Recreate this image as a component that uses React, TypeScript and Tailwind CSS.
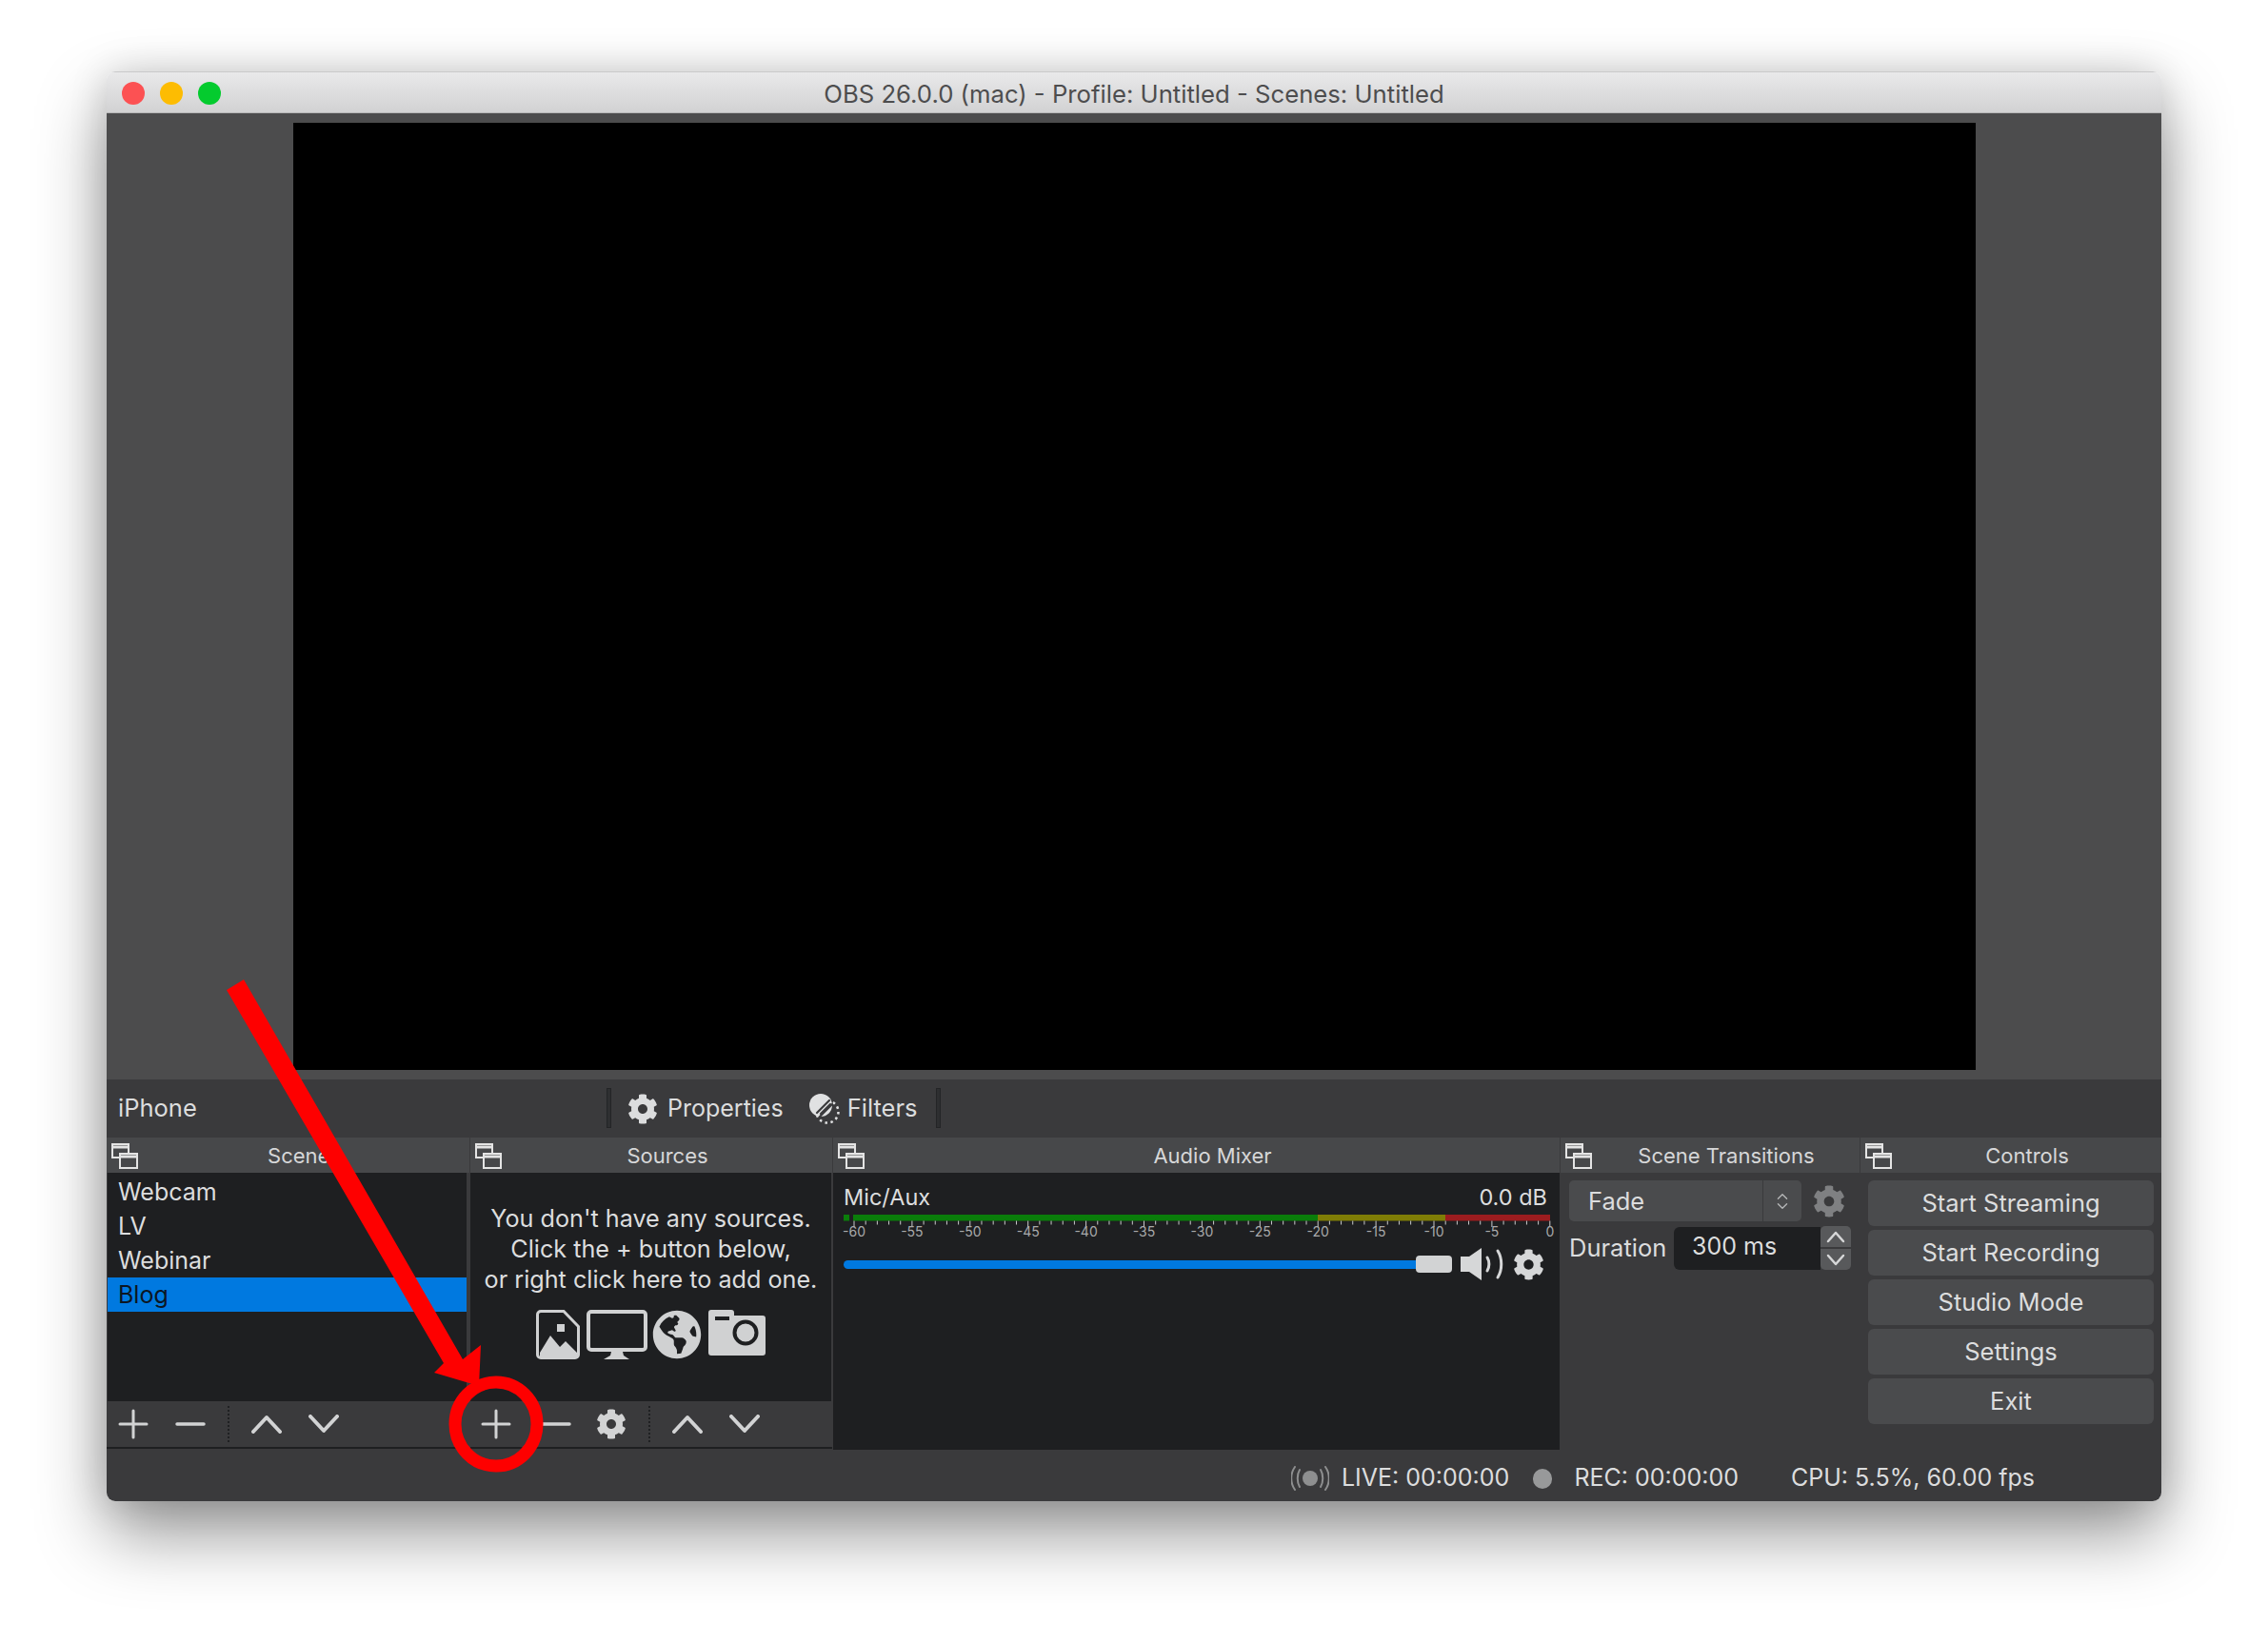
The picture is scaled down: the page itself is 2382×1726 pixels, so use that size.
import { FaCog, FaGlobeAmericas } from "react-icons/fa";
import { ChevronsUpDown } from "lucide-react";

const scenes = ["Webcam", "LV", "Webinar", "Blog"];
const buttons = ["Start Streaming", "Start Recording", "Studio Mode", "Settings", "Exit"];

function FloatIcon() {
  return (
    <svg width="30" height="28" viewBox="0 0 30 28" className="shrink-0 text-[#e4e4e4]" fill="none" stroke="currentColor" strokeWidth="2">
      <rect x="2" y="2" width="17" height="14" />
      <line x1="2" y1="5" x2="19" y2="5" strokeWidth="3" />
      <rect x="10" y="12" width="18" height="15" fill="#47484a" />
      <line x1="10" y1="15" x2="28" y2="15" strokeWidth="3" />
    </svg>
  );
}

function DockHeader({ title }: { title: string }) {
  return (
    <div className="h-[37px] bg-[#47484a] flex items-center shrink-0 pl-1">
      <FloatIcon />
      <div className="flex-1 text-center text-[22px] leading-none pr-0 text-[#d6d7d8]">{title}</div>
    </div>
  );
}

function PlusIcon() {
  return (
    <svg width="32" height="32" viewBox="0 0 32 32" stroke="#d2d3d4" strokeWidth="3" strokeLinecap="round">
      <line x1="2" y1="16" x2="30" y2="16" />
      <line x1="16" y1="2" x2="16" y2="30" />
    </svg>
  );
}

function MinusIcon() {
  return (
    <svg width="32" height="6" viewBox="0 0 32 6" stroke="#d2d3d4" strokeWidth="3.5" strokeLinecap="round">
      <line x1="2" y1="3" x2="30" y2="3" />
    </svg>
  );
}

function Chevron({ up }: { up?: boolean }) {
  return (
    <svg width="32" height="20" viewBox="0 0 32 20" fill="none" stroke="#d2d3d4" strokeWidth="4" strokeLinecap="round" strokeLinejoin="round">
      <polyline points={up ? "2,18 16,3 30,18" : "2,2 16,17 30,2"} />
    </svg>
  );
}

function DottedSep() {
  return <div className="h-[38px] border-l-2 border-dotted border-[#1f2022]" />;
}

function Slot({ w, children }: { w: string; children: React.ReactNode }) {
  return <div className={`${w} shrink-0 flex items-center justify-center`}>{children}</div>;
}

function ImageFileIcon() {
  return (
    <svg width="46" height="52" viewBox="0 0 46 52">
      <path d="M5 1.5h24l15.5 16V47a3.5 3.5 0 0 1-3.5 3.5H5A3.5 3.5 0 0 1 1.5 47V5A3.5 3.5 0 0 1 5 1.5z" fill="none" stroke="#d0d1d2" strokeWidth="3" />
      <rect x="22" y="15" width="8" height="8" fill="#d0d1d2" />
      <path d="M4 45 L15 27 L25 39 L31 33 L43 45 V49 H4 Z" fill="#d0d1d2" />
    </svg>
  );
}

function MonitorIcon() {
  return (
    <svg width="64" height="52" viewBox="0 0 64 52">
      <rect x="2" y="2" width="60" height="40" rx="3" fill="none" stroke="#d0d1d2" strokeWidth="4" />
      <path d="M26 44h12l1 4 6 4H18l7-4z" fill="#d0d1d2" />
    </svg>
  );
}

function CameraIcon() {
  return (
    <svg width="60" height="48" viewBox="0 0 60 48">
      <path d="M3 0h21a3 3 0 0 1 3 3v3h30a3 3 0 0 1 3 3v36a3 3 0 0 1-3 3H3a3 3 0 0 1-3-3V3a3 3 0 0 1 3-3z" fill="#d0d1d2" />
      <rect x="7" y="7" width="15" height="4" fill="#1e1f21" />
      <circle cx="39" cy="24" r="11.5" fill="#d0d1d2" stroke="#1e1f21" strokeWidth="4" />
    </svg>
  );
}

function FilterIcon() {
  return (
    <svg width="32" height="32" viewBox="0 0 32 32">
      <circle cx="19" cy="19" r="11.5" fill="none" stroke="#e0e1e2" strokeWidth="2.5" strokeDasharray="2.5 3.5" />
      <circle cx="12" cy="12" r="12" fill="#e0e1e2" />
      <g stroke="#3a3a3c" strokeWidth="2.2" strokeLinecap="round">
        <line x1="11" y1="24" x2="24" y2="11" />
        <line x1="8" y1="20" x2="21" y2="7" />
        <line x1="12" y1="21" x2="22" y2="11" />
      </g>
    </svg>
  );
}

function SpeakerIcon() {
  return (
    <svg width="46" height="34" viewBox="0 0 46 34" fill="none">
      <path d="M0 9h9L22 0v34L9 25H0z" fill="#d6d7d8" />
      <path d="M28 10c2.5 4 2.5 10 0 14" stroke="#d6d7d8" strokeWidth="3" strokeLinecap="round" />
      <path d="M39 3c5 8 5 20 0 28" stroke="#d6d7d8" strokeWidth="3" strokeLinecap="round" />
    </svg>
  );
}

function LiveIcon() {
  return (
    <svg width="40" height="26" viewBox="0 0 40 26" fill="none" stroke="#8e8f90" strokeWidth="2" strokeLinecap="round">
      <circle cx="20" cy="13" r="8" fill="#8e8f90" stroke="none" />
      <path d="M9 4c-3 5-3 13 0 18" />
      <path d="M31 4c3 5 3 13 0 18" />
      <path d="M4 1c-5 7-5 17 0 24" />
      <path d="M36 1c5 7 5 17 0 24" />
    </svg>
  );
}

function Meter() {
  const x0 = 11;
  const step = 12.18;
  const ticks = Array.from({ length: 61 }, (_, i) => i);
  return (
    <svg width="750" height="30" viewBox="0 0 750 30" className="block overflow-visible">
      <rect x="0" y="0" width="6" height="6.5" fill="#0a7d0a" />
      <rect x="10" y="0" width="488" height="6.5" fill="#0a7d0a" />
      <rect x="498" y="0" width="134" height="6.5" fill="#7f7d06" />
      <rect x="632" y="0" width="110" height="6.5" fill="#9c1c1f" />
      {ticks.map((i) => (
        <line
          key={i}
          x1={x0 + i * step}
          x2={x0 + i * step}
          y1="6.5"
          y2={i % 5 === 0 ? 13 : 10.5}
          stroke="#c9cacb"
          strokeWidth="1"
        />
      ))}
      {ticks
        .filter((i) => i % 5 === 0)
        .map((i) => (
          <text key={i} x={x0 + i * step} y="23" textAnchor="middle" fontSize="14" fill="#a9aaab" fontFamily="Inter, sans-serif">
            {i === 60 ? "0" : `-${60 - i}`}
          </text>
        ))}
    </svg>
  );
}

export default function App() {
  return (
    <div className="relative w-[2382px] h-[1726px] bg-white overflow-hidden pt-[75px] pl-[112px] font-['Inter',sans-serif] text-[#dcddde]">
      <div className="w-[2158px] h-[1502px] flex flex-col rounded-[9px] overflow-hidden shadow-[0_34px_72px_rgba(0,0,0,0.42),0_0_40px_rgba(0,0,0,0.14)]">
        {/* Title bar */}
        <div className="relative h-[44px] shrink-0 bg-gradient-to-b from-[#e9e9ea] to-[#d2d2d3] border-t border-b border-t-[#c9c9ca] border-b-[#b5b5b6] flex items-center justify-center pt-[3px]">
          <div className="absolute left-[16px] top-[10px] flex gap-[16px]">
            <div className="w-[24px] h-[24px] rounded-full bg-[#fc5153]" />
            <div className="w-[24px] h-[24px] rounded-full bg-[#fdbc02]" />
            <div className="w-[24px] h-[24px] rounded-full bg-[#04cb2e]" />
          </div>
          <div className="text-[25.7px] leading-none text-[#4d4d4e]">OBS 26.0.0 (mac) - Profile: Untitled - Scenes: Untitled</div>
        </div>

        {/* Preview */}
        <div className="h-[1015px] shrink-0 bg-[#4c4c4d] flex justify-center pt-[10px]">
          <div className="w-[1767px] h-[995px] bg-black" />
        </div>

        {/* Source toolbar */}
        <div className="h-[61px] shrink-0 bg-[#3a3a3c] flex items-center text-[25.5px]">
          <div className="w-[525px] pl-3">iPhone</div>
          <div className="w-[5px] h-[42px] mt-[-2px] border border-[#232426] bg-[#2e2f31]" />
          <div className="ml-[17px] text-[32px] text-[#dcddde]">
            <FaCog />
          </div>
          <div className="ml-[10px] text-[25px]">Properties</div>
          <div className="ml-[27px]">
            <FilterIcon />
          </div>
          <div className="ml-[8px] text-[25.5px]">Filters</div>
          <div className="ml-[20px] w-[5px] h-[42px] mt-[-2px] border border-[#232426] bg-[#2e2f31]" />
        </div>

        {/* Docks */}
        <div className="h-[328px] shrink-0 bg-[#3a3a3c] flex gap-px text-[25.5px]">
          <div className="w-[381px] flex flex-col">
            <DockHeader title="Scenes" />
            <div className="h-[240px] bg-[#1e1f21] pt-[2px] ml-px mr-[3px] text-[25px]">
              {scenes.map((s) => (
                <div
                  key={s}
                  className={`h-[36px] flex items-center pl-[11px] pt-[1px] ${s === "Blog" ? "bg-[#0079e0] text-[#0c1622]" : ""}`}
                >
                  {s}
                </div>
              ))}
            </div>
            <div className="h-[50px] flex items-center border-b-2 border-[#1e1f21]">
              <Slot w="w-[56px]"><PlusIcon /></Slot>
              <Slot w="w-[64px]"><MinusIcon /></Slot>
              <div className="ml-[7px]"><DottedSep /></div>
              <div className="ml-[9px]"><Slot w="w-[60px]"><Chevron up /></Slot></div>
              <Slot w="w-[60px]"><Chevron /></Slot>
            </div>
          </div>

          <div className="w-[380px] flex flex-col">
            <DockHeader title="Sources" />
            <div className="h-[240px] bg-[#1e1f21] mr-px flex flex-col items-center pt-[32px]">
              <div className="text-center text-[25.2px] leading-[32px] text-[#dcddde]">
                <div>You don't have any sources.</div>
                <div>Click the + button below,</div>
                <div>or right click here to add one.</div>
              </div>
              <div className="flex items-start gap-[5px] mt-[16px]">
                <ImageFileIcon />
                <div className="ml-[2px]"><MonitorIcon /></div>
                <div className="text-[52px] text-[#d0d1d2]"><FaGlobeAmericas /></div>
                <div className="ml-[2px]"><CameraIcon /></div>
              </div>
            </div>
            <div className="h-[50px] flex items-center border-b-2 border-[#1e1f21]">
              <Slot w="w-[54px]"><PlusIcon /></Slot>
              <Slot w="w-[72px]"><MinusIcon /></Slot>
              <Slot w="w-[44px]"><span className="text-[32px] text-[#d2d3d4]"><FaCog /></span></Slot>
              <div className="ml-[17px]"><DottedSep /></div>
              <div className="ml-[9px]"><Slot w="w-[60px]"><Chevron up /></Slot></div>
              <Slot w="w-[60px]"><Chevron /></Slot>
            </div>
          </div>

          <div className="w-[763px] flex flex-col">
            <DockHeader title="Audio Mixer" />
            <div className="flex-1 bg-[#1e1f21] pl-[11px] pr-[13px] pt-[10px]">
              <div className="flex justify-between text-[23.5px] leading-[32px]">
                <span>Mic/Aux</span>
                <span>0.0 dB</span>
              </div>
              <div className="mt-[2px]"><Meter /></div>
              <div className="flex items-center mt-[5px]">
                <div className="w-[601px] h-[9px] bg-[#0079e0] rounded-l-full" />
                <div className="w-[38px] h-[18px] bg-[#d2d3d4] rounded-[4px]" />
                <div className="ml-[9px]"><SpeakerIcon /></div>
                <div className="ml-[9px] text-[33px] text-[#d6d7d8]"><FaCog /></div>
              </div>
            </div>
          </div>

          <div className="w-[314px] flex flex-col">
            <DockHeader title="Scene Transitions" />
            <div className="flex-1 pl-[9px] pt-[8px]">
              <div className="flex items-center">
                <div className="w-[244px] h-[43px] bg-[#4a4b4d] rounded-[5px] flex items-center">
                  <div className="w-[203px] pl-[20px] pt-[1px]">Fade</div>
                  <div className="flex-1 h-full border-l border-[#3a3a3c] flex items-center justify-center text-[#b5b6b7]">
                    <ChevronsUpDown size={22} strokeWidth={1.5} />
                  </div>
                </div>
                <div className="ml-[12px] text-[34px] text-[#7f8082]"><FaCog /></div>
              </div>
              <div className="flex items-center mt-[5px]">
                <div className="w-[110px]">Duration</div>
                <div className="w-[154px] h-[45px] bg-[#1e1f21] rounded-l-[6px] pl-[19px] pb-[2px] flex items-center text-[25px]">300 ms</div>
                <div className="w-[32px] flex flex-col gap-[2px]">
                  <div className="h-[22px] bg-[#58595b] rounded-t-[5px] flex items-center justify-center">
                    <svg width="20" height="13" viewBox="0 0 20 13" fill="none" stroke="#d6d7d8" strokeWidth="2.5" strokeLinecap="round" strokeLinejoin="round"><polyline points="2,11 10,2 18,11" /></svg>
                  </div>
                  <div className="h-[22px] bg-[#58595b] rounded-b-[5px] flex items-center justify-center">
                    <svg width="20" height="13" viewBox="0 0 20 13" fill="none" stroke="#d6d7d8" strokeWidth="2.5" strokeLinecap="round" strokeLinejoin="round"><polyline points="2,2 10,11 18,2" /></svg>
                  </div>
                </div>
              </div>
            </div>
          </div>

          <div className="w-[316px] flex flex-col">
            <DockHeader title="Controls" />
            <div className="flex-1 flex flex-col gap-[4px] pl-[8px] pr-[8px] pt-[8px]">
              {buttons.map((b) => (
                <div key={b} className="h-[48px] bg-[#4a4b4d] rounded-[6px] flex items-center justify-center pt-[1px]">{b}</div>
              ))}
            </div>
          </div>
        </div>

        {/* Status bar */}
        <div className="flex-1 bg-[#3a3a3c] flex items-center justify-end text-[25px] pr-[133px] pt-[6px]">
          <LiveIcon />
          <span className="ml-[13px]">LIVE: 00:00:00</span>
          <div className="ml-[25px] w-[20px] h-[21px] rounded-full bg-[#98999a]" />
          <span className="ml-[23px]">REC: 00:00:00</span>
          <span className="ml-[55px]">CPU: 5.5%, 60.00 fps</span>
        </div>
      </div>

      {/* Red annotation */}
      <svg className="absolute inset-0 pointer-events-none" width="2382" height="1726" viewBox="0 0 2382 1726">
        <polygon points="238,1040 256,1029 486,1428 505,1413 503,1456 456,1442 466,1432" fill="#fe0000" />
        <ellipse cx="521" cy="1496" rx="43" ry="44" fill="none" stroke="#fe0000" strokeWidth="13" />
      </svg>
    </div>
  );
}
